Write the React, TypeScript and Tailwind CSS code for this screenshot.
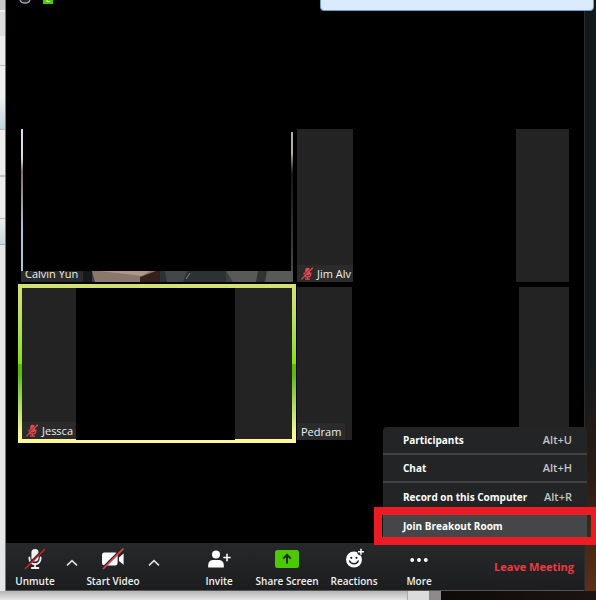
import type { ReactNode } from "react";

function MutedMic({ className }: { className: string }) {
  return (
    <svg viewBox="0 0 12 13" className={className} aria-hidden="true">
      <rect x="4.2" y="0.8" width="4.8" height="7.6" rx="2.2" fill="#e04a50" />
      <path d="M3.2 5.5v1.2a3.3 3.3 0 0 0 6.6 0V5.5M6.5 10v2M4 12.2h5" fill="none" stroke="#e04a50" strokeWidth="1.3" />
      <path d="M11 0.4 0 11.6" stroke="#2b2b2b" strokeWidth="1" />
      <path d="M11.8 0.8 0.4 12.4" stroke="#e04a50" strokeWidth="1.3" />
    </svg>
  );
}

function MicIcon() {
  return (
    <svg viewBox="0 0 22 22" className="h-[22px] w-[22px]" aria-hidden="true">
      <rect x="7.4" y="1" width="7.2" height="12.4" rx="3.6" fill="#f2f2f2" />
      <path d="M5.4 9.4v1.2a5.6 5.6 0 0 0 11.2 0V9.4M11 16v3.5M7.8 20h6.6" fill="none" stroke="#f2f2f2" strokeWidth="1.8" strokeLinecap="round" />
      <path d="M20 0.6 0.6 20" stroke="#232527" strokeWidth="1.6" />
      <path d="M21 1 1 21" stroke="#c8252c" strokeWidth="1.6" />
    </svg>
  );
}

function CameraIcon() {
  return (
    <svg viewBox="0 0 24 22" className="h-[22px] w-6" aria-hidden="true">
      <rect x="1" y="4.5" width="15.6" height="13" rx="2.4" fill="#fff" />
      <path d="M18 9.4 22.6 5.4v11.4L18 13z" fill="#fff" />
      <path d="M21.4 0 1 20.4" stroke="#232527" strokeWidth="1.6" />
      <path d="M22.4 0.6 2 21" stroke="#df4248" strokeWidth="1.7" />
    </svg>
  );
}

function InviteIcon() {
  return (
    <svg viewBox="0 0 24 22" className="h-[22px] w-6" aria-hidden="true">
      <circle cx="9" cy="6.6" r="4" fill="#fff" />
      <path d="M1.2 19.4v-2.2c0-3 2-5.2 5-5.2h5.6c3 0 5 2.2 5 5.2v2.2z" fill="#fff" />
      <path d="M20 5.8v7.4M16.3 9.5h7.4" stroke="#fff" strokeWidth="1.6" />
    </svg>
  );
}

function ShareIcon() {
  return (
    <svg viewBox="0 0 24 22" className="h-[22px] w-6" aria-hidden="true">
      <rect x="0" y="2" width="24" height="18" rx="2.5" fill="#4cc900" />
      <path d="M12 15.6V7.2M8.2 10.6 12 6.8l3.8 3.8" fill="none" stroke="#1d2a16" strokeWidth="1.9" />
    </svg>
  );
}

function ReactionIcon() {
  return (
    <svg viewBox="0 0 22 22" className="h-[22px] w-[22px]" aria-hidden="true">
      <circle cx="11" cy="11.5" r="8" fill="#fff" />
      <circle cx="18" cy="3.8" r="3.8" fill="#232527" />
      <path d="M18 0.8v6M15 3.8h6" stroke="#fff" strokeWidth="1.5" />
      <circle cx="8.3" cy="9.8" r="1.1" fill="#222" />
      <circle cx="13.5" cy="9.8" r="1.1" fill="#222" />
      <path d="M6.6 13c1.6 3.6 7.2 3.6 8.6 0" fill="none" stroke="#222" strokeWidth="1.5" strokeLinecap="round" />
    </svg>
  );
}

function MoreIcon() {
  return (
    <svg viewBox="0 0 22 22" className="h-[22px] w-[22px]" aria-hidden="true">
      <circle cx="4.2" cy="12" r="1.9" fill="#fff" />
      <circle cx="11" cy="12" r="1.9" fill="#fff" />
      <circle cx="17.8" cy="12" r="1.9" fill="#fff" />
    </svg>
  );
}

function Tool({ icon, label, className }: { icon: ReactNode; label: string; className: string }) {
  return (
    <button type="button" className={`flex h-12 shrink-0 flex-col items-center pt-[5px] ${className}`}>
      {icon}
      <span className="mt-1 whitespace-nowrap">{label}</span>
    </button>
  );
}

function Caret({ label, className }: { label: string; className: string }) {
  return (
    <button type="button" aria-label={label} className={`flex h-12 shrink-0 items-start pt-4 ${className}`}>
      <svg viewBox="0 0 12 8" className="h-2 w-3" aria-hidden="true">
        <path d="M1 6.4 6 1.6l5 4.8" fill="none" stroke="#ddd" strokeWidth="1.6" />
      </svg>
    </button>
  );
}

function NameTag({ name, muted, className }: { name: string; muted?: boolean; className?: string }) {
  return (
    <div className={`absolute bottom-0 left-0 flex h-[17px] items-center gap-1 overflow-hidden bg-[#2b2b2b] pl-1 text-[11px] leading-4 whitespace-nowrap text-[#eee] ${className ?? ""}`}>
      {muted && <MutedMic className="h-[13px] w-3 shrink-0" />}
      <span>{name}</span>
    </div>
  );
}

/** Lower edge of the camera feed that stays visible under the cover. */
function FeedEdge() {
  return (
    <svg viewBox="0 0 272 11" preserveAspectRatio="none" className="absolute inset-x-0 bottom-0 h-[11px] w-full" aria-hidden="true">
      <rect width="272" height="11" fill="#3d4041" />
      <rect x="61" width="10" height="11" fill="#17181a" />
      <path d="M71 0h66v11H74z" fill="#8a786c" />
      <path d="M79 0h50l-8 5z" fill="#ae9786" />
      <path d="m119 6 16-6h4v11h-20z" fill="#33211a" />
      <path d="M139 0h66v11h-66z" fill="#2c3133" />
      <path d="m144 0 22 0-4 11h-16z" fill="#42484a" />
      <path d="m165 8 4-6" stroke="#858b8b" />
      <path d="M205 0h67v11h-60z" fill="#585a58" />
      <path d="M237 0h9l-2 11h-9z" fill="#333" />
    </svg>
  );
}

const menuItems = [
  { label: "Participants", keys: "Alt+U" },
  { label: "Chat", keys: "Alt+H" },
  { label: "Record on this Computer", keys: "Alt+R" },
];

export default function App() {
  return (
    <div className="relative flex min-h-screen w-full flex-col overflow-hidden bg-black font-['Open_Sans','Noto_Sans',sans-serif]">
      <div className="flex flex-1">
        <div className="flex w-[6px] shrink-0 flex-col border-r border-[#777] bg-[#e6e6e6]">
          <div className="h-[10px] bg-[#c5c9cc]" />
          <div className="h-[26px] border-t-2 border-[#eee] bg-[#dcdedc]" />
          <div className="h-[30px] border-b border-[#bbb] bg-[#ececec]" />
          <div className="h-16 border-b border-[#a9bfca] bg-linear-to-b from-[#f0f0f0] from-50% to-[#bfd4df]" />
          <div className="h-[47px] border-b-2 border-[#c4c4c4] bg-[#eee]" />
          <div className="h-[42px] border-b border-[#bbb] bg-[#eee]" />
          <div className="h-[26px] border-b border-[#9bb0b8] bg-linear-to-b from-[#ececec] to-[#c9d8df]" />
        </div>

        <main className="flex min-w-0 flex-1 flex-col bg-black">
          <div className="flex h-[129px] items-start gap-3 pl-[13px]">
            <svg viewBox="0 0 12 4" className="h-1 w-3" aria-hidden="true">
              <path d="M1 0c1 4 9 4 10 0" fill="#22202c" stroke="#aaa" strokeWidth="1.3" />
            </svg>
            <svg viewBox="0 0 10 4" className="h-1 w-[10px]" aria-hidden="true">
              <path d="M0 0h10v4H0z" fill="#4cc900" />
              <path d="M4 0v1.5h3" fill="none" stroke="#e8ffe0" />
            </svg>
          </div>

          <div className="grid grid-cols-2 gap-x-1 gap-y-[5px] px-[15px]">
            <section className="relative h-[153px]">
              <FeedEdge />
              <NameTag name="Calvin Yun" className="w-[62px]" />
              <div className="absolute inset-x-0 top-0 bottom-[11px] flex justify-between bg-black">
                <div className="w-0.5 bg-linear-to-b from-[#cfe2f0] from-20% via-[#8a7060] via-30% to-[#a9c3dc] to-70%" />
                <div className="mt-[3px] w-0.5 bg-linear-to-b from-[#b5b09a] from-15% via-[#15181a] via-30% to-[#444946]" />
              </div>
            </section>

            <section className="relative flex h-[153px] justify-between">
              <div className="relative w-14 bg-[#232323]">
                <NameTag name="Jim Alv" muted className="w-14" />
              </div>
              <div className="w-[53px] bg-[#232323]" />
            </section>

            <section className="relative flex h-[153px] justify-between">
              <div className="absolute -inset-[3px] bg-linear-to-b from-[#d3e072] from-5% via-[#86e00c] via-50% to-[#62bd12] to-50%" />
              <div className="absolute inset-x-[-3px] -bottom-[3px] h-[79px] bg-linear-to-b from-[#5cbc0e] from-15% to-[#fdf99a] to-90%" />
              <div className="relative my-px ml-px w-[54px] bg-[#232323]">
                <NameTag name="Jessca" muted className="w-[54px]" />
              </div>
              <div className="relative mt-px flex-1 bg-black" />
              <div className="relative my-px mr-px w-[57px] bg-[#232323]" />
            </section>

            <section className="relative flex h-[153px] justify-between">
              <div className="relative w-[55px] bg-[#232323]">
                <NameTag name="Pedram" className="w-12" />
              </div>
              <div className="w-[50px] bg-[#232323]" />
            </section>
          </div>

          <div className="min-h-[60px] flex-1" />

          <nav aria-label="Meeting controls" className="flex h-12 items-center border-b border-[#555] bg-linear-to-b from-[#26282a] to-[#1b1d1f] text-[10px] leading-[14px] font-semibold text-[#f0f0f0]">
            <Tool icon={<MicIcon />} label="Unmute" className="w-[58px]" />
            <Caret label="Audio options" className="w-4 pl-0.5" />
            <Tool icon={<CameraIcon />} label="Start Video" className="w-[66px]" />
            <Caret label="Video options" className="w-4 pl-0.5" />
            <div className="flex-1" />
            <Tool icon={<InviteIcon />} label="Invite" className="w-12" />
            <div className="w-[13px]" />
            <Tool icon={<ShareIcon />} label="Share Screen" className="w-[62px]" />
            <div className="w-2" />
            <Tool icon={<ReactionIcon />} label="Reactions" className="w-14" />
            <div className="w-3" />
            <Tool icon={<MoreIcon />} label="More" className="w-[50px]" />
            <button type="button" className="ml-[50px] pr-[10px] text-[11px] font-bold whitespace-nowrap text-[#f0383f]">
              Leave Meeting
            </button>
          </nav>
        </main>

        <div className="w-3 shrink-0 border-l border-[#292b2c] bg-linear-to-b from-[#11191c] from-60% via-[#2a1b13] via-80% to-[#5b3018]" />
      </div>

      <div className="flex h-[9px] shrink-0 bg-linear-to-r from-black to-[#1c1411]">
        <div className="w-[407px] bg-linear-to-b from-[#b5b5b5] to-[#e6e6e6]" />
        <div className="w-[22px] border-l border-[#aaa] bg-[#dcdcdc]" />
        <div className="w-3 bg-[#8b8b8b]" />
      </div>

      <div className="absolute -top-2 right-[2px] h-[19px] w-[274px] rounded border border-[#6f9bc8] bg-[#dbebfe]" />

      <div className="absolute right-[9px] bottom-[62px] w-[204px] rounded-t-sm bg-[#222426] text-[10px] leading-[14px] font-bold text-white">
        {menuItems.map((item, index) => (
          <button
            key={item.label}
            type="button"
            className={`flex h-7 w-full items-center justify-between pr-[15px] pl-5 ${index < 2 ? "border-b-2 border-[#404244]" : ""}`}
          >
            <span className="whitespace-nowrap">{item.label}</span>
            <span className="text-[11px] font-semibold text-[#c4c4c4]">{item.keys}</span>
          </button>
        ))}
        <div className="h-[3px]" />
        <button type="button" className="flex h-6 w-full items-center bg-[#444648] pl-5">
          Join Breakout Room
        </button>
        <div className="pointer-events-none absolute -right-[9px] -bottom-[7px] -left-[9px] h-[38px] border-8 border-r-[5px] border-[#ec1c24]" />
      </div>
    </div>
  );
}
